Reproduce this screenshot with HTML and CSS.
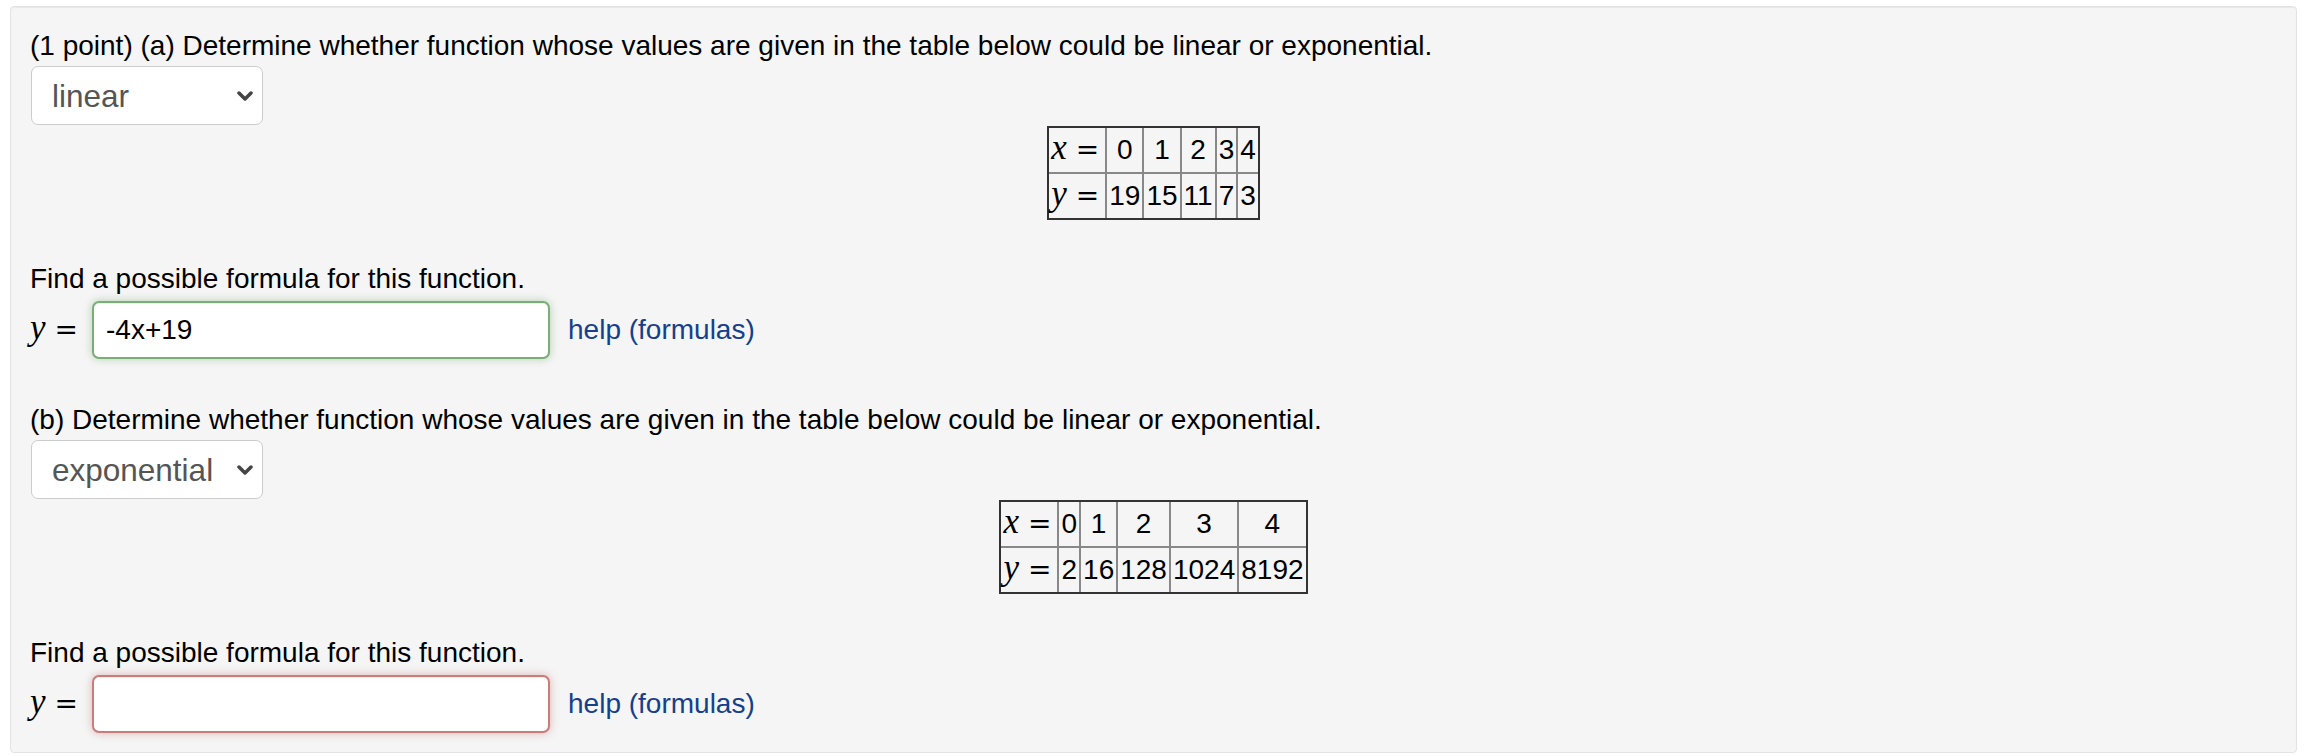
FILE: index.html
```html
<!DOCTYPE html>
<html lang="en">
<head>
    <meta charset="UTF-8">
    <meta name="viewport" content="width=device-width, initial-scale=1.0">
    <title>Linear or exponential</title>
    <link rel="stylesheet" href="styles.css">
</head>
<body>
    <div class="problem">
        <!-- part (a) -->
        <p class="line">(1 point) (a) Determine whether function whose values are given in the table below could be linear or exponential.</p>
        <div class="select">
            <span>linear</span>
            <svg class="chevron" width="16" height="10" viewBox="0 0 16 10"><polyline points="2,2 8,8 14,2" /></svg>
        </div>
        <table class="values">
            <tr>
                <td><span class="math"><i>x</i><span class="rel">=</span></span></td>
                <td>0</td><td>1</td><td>2</td><td>3</td><td>4</td>
            </tr>
            <tr>
                <td><span class="math"><i>y</i><span class="rel">=</span></span></td>
                <td>19</td><td>15</td><td>11</td><td>7</td><td>3</td>
            </tr>
        </table>
        <p class="line gap">Find a possible formula for this function.</p>
        <div class="answer">
            <span class="math"><i>y</i><span class="rel">=</span></span>
            <div class="input correct">-4x+19</div>
            <a href="#" class="help">help (formulas)</a>
        </div>

        <!-- part (b) -->
        <p class="line gap">(b) Determine whether function whose values are given in the table below could be linear or exponential.</p>
        <div class="select">
            <span>exponential</span>
            <svg class="chevron" width="16" height="10" viewBox="0 0 16 10"><polyline points="2,2 8,8 14,2" /></svg>
        </div>
        <table class="values">
            <tr>
                <td><span class="math"><i>x</i><span class="rel">=</span></span></td>
                <td>0</td><td>1</td><td>2</td><td>3</td><td>4</td>
            </tr>
            <tr>
                <td><span class="math"><i>y</i><span class="rel">=</span></span></td>
                <td>2</td><td>16</td><td>128</td><td>1024</td><td>8192</td>
            </tr>
        </table>
        <p class="line gap">Find a possible formula for this function.</p>
        <div class="answer">
            <span class="math"><i>y</i><span class="rel">=</span></span>
            <div class="input incorrect"></div>
            <a href="#" class="help">help (formulas)</a>
        </div>
    </div>
</body>
</html>
```

FILE: styles.css
```css
body {
    margin: 6px 10px 0;
    font-family: "Liberation Sans", Arial, sans-serif;
    font-size: 28px;
    line-height: 40px;
    color: #000;
    background: #fff;
}
.problem {
    background: #f5f5f5;
    border: 1px solid #e3e3e3;
    border-radius: 4px;
    box-shadow: inset 0 1px 1px rgba(0, 0, 0, 0.05);
    padding: 19px 19px 17px;
}
.line {
    margin: 0;
    height: 40px;
}
.gap {
    margin-top: 39px;
}
.select {
    display: flex;
    align-items: center;
    justify-content: space-between;
    box-sizing: border-box;
    width: 232px;
    height: 59px;
    margin-left: 1px;
    padding: 0 9px 0 20px;
    background: #fff;
    border: 1px solid #ccc;
    border-radius: 7px;
    color: #555;
    font-size: 31.5px;
}
.chevron polyline {
    fill: none;
    stroke: #444;
    stroke-width: 3.5;
    stroke-linecap: round;
    stroke-linejoin: round;
}
.values {
    margin: 1px auto 0;
    border: 2px solid #333;
    border-spacing: 0;
}
.values td {
    padding: 2px;
    line-height: 40px;
    text-align: center;
    border-right: 2px solid #888;
    border-bottom: 2px solid #888;
}
.values td:last-child {
    border-right: none;
}
.values tr:last-child td {
    border-bottom: none;
}
.math {
    white-space: nowrap;
}
.math i {
    font-family: "Liberation Serif", "Times New Roman", serif;
    font-size: 35px;
    line-height: 1;
}
.math .rel {
    font-family: "DejaVu Sans", sans-serif;
    font-size: 28px;
    line-height: 1;
    margin: 0 4px 0 9px;
}
.answer {
    display: flex;
    align-items: center;
    height: 62px;
}
.answer .math {
    margin-right: 10px;
}
.input {
    box-sizing: border-box;
    width: 458px;
    height: 58px;
    padding: 0 12px;
    background: #fff;
    border: 2px solid;
    border-radius: 7px;
    line-height: 54px;
    color: #000;
}
.correct {
    border-color: rgba(100, 160, 95, 0.85);
    box-shadow: inset 0 1px 1px rgba(0, 0, 0, 0.075), 0 0 8px rgba(100, 160, 95, 0.45);
}
.incorrect {
    border-color: rgba(195, 100, 100, 0.85);
    box-shadow: inset 0 1px 1px rgba(0, 0, 0, 0.075), 0 0 8px rgba(195, 100, 100, 0.45);
}
.help {
    margin-left: 18px;
    color: #15408c;
    text-decoration: none;
}
```
